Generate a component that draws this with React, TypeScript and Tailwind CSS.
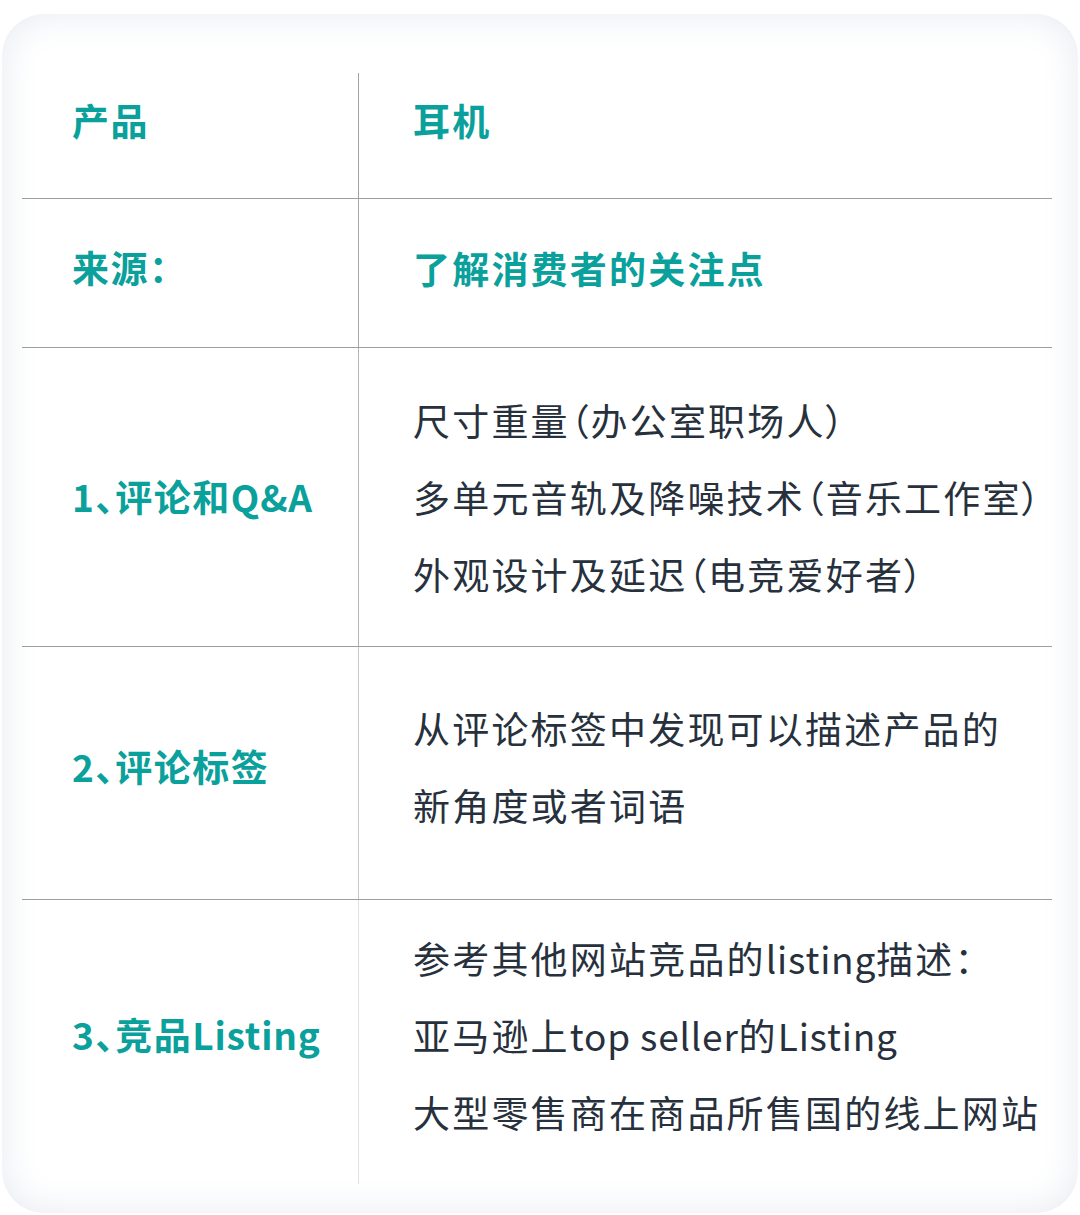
const FONT = {
  fontFamily: '"Noto Sans CJK SC", "Noto Sans", sans-serif',
};

type Row = {
  label: string;
  lines: string[];
  height: string;
  lineColor: string;
  lift: string;
  accent?: boolean;
  last?: boolean;
};

const ROWS: Row[] = [
  { label: "产品", lines: ["耳机"], height: "h-[126px]", lineColor: "border-r-[#a2a2a2]", lift: "pb-[30px]", accent: true },
  { label: "来源：", lines: ["了解消费者的关注点"], height: "h-[149px]", lineColor: "border-r-[#a8a8a8]", lift: "pb-[10px]", accent: true },
  {
    label: "1、评论和Q&A",
    lines: ["尺寸重量（办公室职场人）", "多单元音轨及降噪技术（音乐工作室）", "外观设计及延迟（电竞爱好者）"],
    height: "h-[299px]",
    lineColor: "border-r-[#b4b4b4]",
    lift: "pb-0",
  },
  {
    label: "2、评论标签",
    lines: ["从评论标签中发现可以描述产品的", "新角度或者词语"],
    height: "h-[253px]",
    lineColor: "border-r-[#c9c9c9]",
    lift: "pb-[12px]",
  },
  {
    label: "3、竞品Listing",
    lines: ["参考其他网站竞品的listing描述：", "亚马逊上top seller的Listing", "大型零售商在商品所售国的线上网站"],
    height: "h-[284px]",
    lineColor: "border-r-[#e0e0e0]",
    lift: "pb-[14px]",
    last: true,
  },
];

// latin runs sit tighter than the CJK characters around them
function Mixed({ text }: { text: string }): React.JSX.Element {
  const parts = text.split(/([A-Za-z&][A-Za-z& ]*[A-Za-z&]?)/).filter(Boolean);
  return (
    <>
      {parts.map((part, i) =>
        /[A-Za-z]/.test(part) ? (
          <span key={i} className="tracking-[0.8px]">
            {part}
          </span>
        ) : (
          <span key={i}>{part}</span>
        )
      )}
    </>
  );
}

function TableRow({ row }: { row: Row }): React.JSX.Element {
  return (
    <div
      className={`grid grid-cols-[337px_1fr] ${row.height} ${
        row.last ? "" : "border-b-[1.5px] border-b-[#9e9e9e]"
      }`}
    >
      <div
        className={`flex items-center border-r-[1.5px] ${row.lineColor} ${row.lift} pl-[50px] text-[37px] font-bold tracking-[1.5px] text-[#0aa09b]`}
      >
        <div>
          <Mixed text={row.label} />
        </div>
      </div>
      <div
        className={`flex flex-col justify-center ${row.lift} pl-[54px] text-[37px] leading-[77px] tracking-[2.2px] ${
          row.accent ? "font-bold text-[#0aa09b]" : "text-[#27313d]"
        }`}
      >
        {row.lines.map((line) => (
          <div key={line}>
            <Mixed text={line} />
          </div>
        ))}
      </div>
    </div>
  );
}

export default function App(): React.JSX.Element {
  return (
    <div className="min-h-[1215px] bg-white pt-[14px] [font-feature-settings:'palt']" style={FONT}>
      <div className="mx-[2px] h-[1199px] rounded-[42px] bg-white pl-[20px] pr-[26px] pt-[59px] shadow-[inset_0_0_38px_#e6eaf0]">
        {ROWS.map((row) => (
          <TableRow key={row.label} row={row} />
        ))}
      </div>
    </div>
  );
}
